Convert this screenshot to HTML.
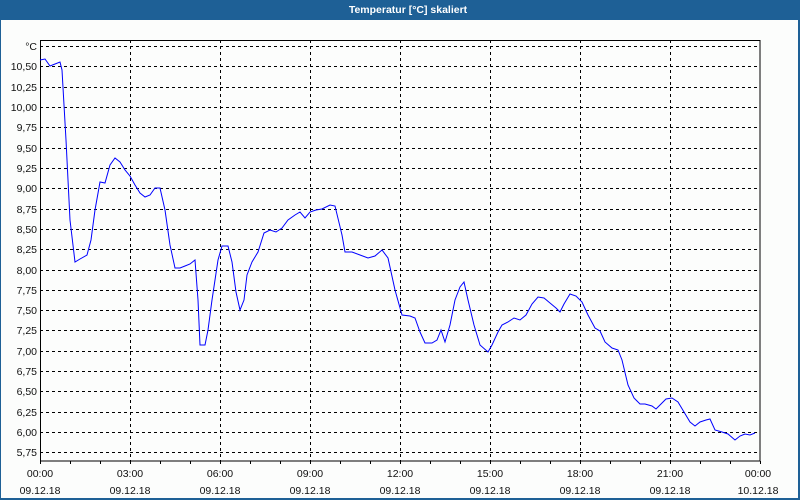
<!DOCTYPE html>
<html><head><style>
body{margin:0;width:800px;height:500px;overflow:hidden;background:#fcfdfc}
svg{display:block}
text{font-family:"Liberation Sans","DejaVu Sans",sans-serif;font-size:10.5px;fill:#111}
</style></head><body>
<svg width="800" height="500" xmlns="http://www.w3.org/2000/svg">
<rect x="0" y="0" width="800" height="500" fill="#fcfdfc"/>
<rect x="0" y="0" width="800" height="20" fill="#1e6096"/>
<rect x="0.5" y="0.5" width="798" height="498" fill="none" stroke="#1e6096" stroke-width="1"/>
<rect x="798" y="0" width="2" height="500" fill="#1e6096"/>
<rect x="0" y="498" width="800" height="2" fill="#1e6096"/>
<text x="408" y="13" text-anchor="middle" style="font-weight:bold;fill:#fff;font-size:10.5px">Temperatur [°C] skaliert</text>
<g stroke="#000" stroke-width="1" stroke-dasharray="3,3" fill="none">
<path d="M40 46.5H760M40 66.5H760M40 87.5H760M40 107.5H760M40 127.5H760M40 148.5H760M40 168.5H760M40 188.5H760M40 209.5H760M40 229.5H760M40 249.5H760M40 270.5H760M40 290.5H760M40 310.5H760M40 330.5H760M40 351.5H760M40 371.5H760M40 391.5H760M40 412.5H760M40 432.5H760M40 452.5H760"/>
<path d="M130.5 40V461M220.5 40V461M310.5 40V461M400.5 40V461M490.5 40V461M580.5 40V461M670.5 40V461"/>
</g>
<rect x="40.5" y="40.5" width="719.5" height="420.5" fill="none" stroke="#000"/>
<path d="M70.5 461v3M100.5 461v3M130.5 461v3M160.5 461v3M190.5 461v3M220.5 461v3M250.5 461v3M280.5 461v3M310.5 461v3M340.5 461v3M370.5 461v3M400.5 461v3M430.5 461v3M460.5 461v3M490.5 461v3M520.5 461v3M550.5 461v3M580.5 461v3M610.5 461v3M640.5 461v3M670.5 461v3M700.5 461v3M730.5 461v3M40.5 461v3M760.5 461v3" stroke="#000"/>
<polyline fill="none" stroke="#0000ff" stroke-width="1" points="40,60 45,59 50,66 55,64 60,62 62,70 66,140 70,220 75,262 80,259 87,255 91,240 95,210 100,182 105,183 110,165 115,158 120,162 125,170 130,176 135,185 140,193 145,197 150,195 155,188 160,188 165,210 170,245 175,268 180,268 185,266 190,264 195,260 198,300 200,345 205,345 208,330 212,300 218,260 222,246 228,246 232,262 236,292 240,310 244,300 247,275 252,262 258,252 264,233 270,230 276,232 282,228 288,220 295,215 300,212 305,218 310,212 316,210 322,209 330,205 335,206 342,235 345,252 352,252 360,255 368,258 375,256 382,250 388,258 395,290 402,315 410,316 415,318 420,332 425,343 432,343 437,340 441,330 445,342 450,325 455,300 460,287 464,282 468,300 474,325 480,345 488,352 492,345 498,332 502,325 508,322 514,318 520,320 526,315 532,304 538,297 544,298 550,303 556,308 560,312 564,304 570,294 576,296 582,302 588,315 595,328 600,331 605,342 612,348 618,350 622,360 628,385 634,398 640,404 645,404 652,406 656,409 660,405 666,399 672,398 678,402 684,412 690,422 695,426 700,422 706,420 710,419 715,430 722,432 728,434 735,440 740,436 745,434 750,435 755,433"/>
<g text-anchor="end">
<text x="37" y="50">°C</text>
<text x="37" y="70">10,50</text>
<text x="37" y="91">10,25</text>
<text x="37" y="111">10,00</text>
<text x="37" y="131">9,75</text>
<text x="37" y="152">9,50</text>
<text x="37" y="172">9,25</text>
<text x="37" y="192">9,00</text>
<text x="37" y="213">8,75</text>
<text x="37" y="233">8,50</text>
<text x="37" y="253">8,25</text>
<text x="37" y="274">8,00</text>
<text x="37" y="294">7,75</text>
<text x="37" y="314">7,50</text>
<text x="37" y="334">7,25</text>
<text x="37" y="355">7,00</text>
<text x="37" y="375">6,75</text>
<text x="37" y="395">6,50</text>
<text x="37" y="416">6,25</text>
<text x="37" y="436">6,00</text>
<text x="37" y="456">5,75</text>
</g>
<g text-anchor="middle">
<text x="40" y="477">00:00</text><text x="40" y="494">09.12.18</text>
<text x="130" y="477">03:00</text><text x="130" y="494">09.12.18</text>
<text x="220" y="477">06:00</text><text x="220" y="494">09.12.18</text>
<text x="310" y="477">09:00</text><text x="310" y="494">09.12.18</text>
<text x="400" y="477">12:00</text><text x="400" y="494">09.12.18</text>
<text x="490" y="477">15:00</text><text x="490" y="494">09.12.18</text>
<text x="580" y="477">18:00</text><text x="580" y="494">09.12.18</text>
<text x="670" y="477">21:00</text><text x="670" y="494">09.12.18</text>
<text x="758" y="477">00:00</text><text x="758" y="494">10.12.18</text>
</g>
</svg>
</body></html>
